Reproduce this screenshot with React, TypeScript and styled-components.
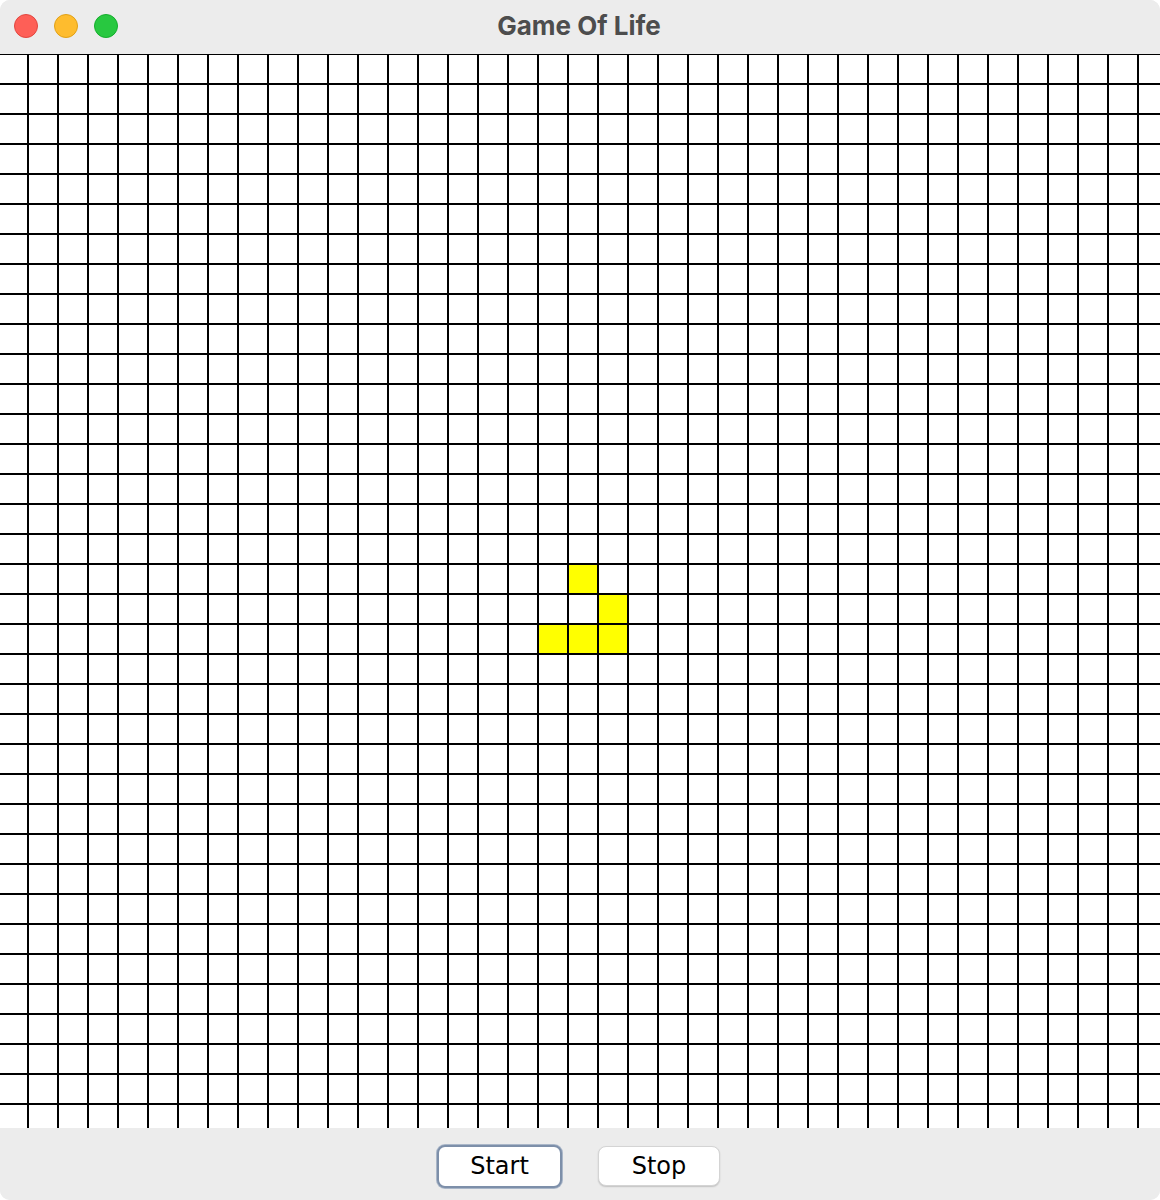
import styled, { createGlobalStyle } from 'styled-components';

const ROWS = 36;
const COLS = 39;

// glider from the screenshot: [row, col]
const alive = new Set(['17-19', '18-20', '19-18', '19-19', '19-20']);

const GlobalStyle = createGlobalStyle`
  html, body {
    margin: 0;
    padding: 0;
    background: #ffffff;
  }
  body {
    font-family: 'DejaVu Sans', 'Liberation Sans', sans-serif;
  }
`;

export default function App() {
  const cells = [];
  for (let r = 0; r < ROWS; r++) {
    for (let c = 0; c < COLS; c++) {
      cells.push(<Cell key={`${r}-${c}`} $alive={alive.has(`${r}-${c}`)} />);
    }
  }

  return (
    <>
      <GlobalStyle />
      <Window>
        <TitleBar>
          <Lights>
            <Light $color="#fe5f57" $edge="#e2463f" />
            <Light $color="#febc2e" $edge="#e1a116" />
            <Light $color="#28c840" $edge="#14ae2c" />
          </Lights>
          <Title>Game Of Life</Title>
        </TitleBar>
        <Board>
          <Grid>{cells}</Grid>
        </Board>
        <ButtonBar>
          <Button $focused>Start</Button>
          <Button>Stop</Button>
        </ButtonBar>
      </Window>
    </>
  );
}

const Window = styled.div`
  width: 1160px;
  height: 1200px;
  display: flex;
  flex-direction: column;
  border-radius: 10px;
  overflow: hidden;
  background: #ececec;
`;

const TitleBar = styled.div`
  position: relative;
  height: 54px;
  flex: none;
  display: flex;
  align-items: center;
  justify-content: center;
  background: #ececec;
`;

const Lights = styled.div`
  position: absolute;
  left: 14px;
  top: 14px;
  display: flex;
  gap: 16px;
`;

const Light = styled.span<{ $color: string; $edge: string }>`
  width: 24px;
  height: 24px;
  box-sizing: border-box;
  border-radius: 50%;
  background: ${({ $color }) => $color};
  border: 1px solid ${({ $edge }) => $edge};
`;

const Title = styled.div`
  font-family: Inter, 'Noto Sans', sans-serif;
  font-weight: 700;
  font-size: 26px;
  color: #4d4d4d;
  margin-top: -4px;
  margin-left: -2px;
`;

const Board = styled.div`
  height: 1074px;
  flex: none;
  box-sizing: border-box;
  border-top: 1px solid #000;
  overflow: hidden;
  background: #fff;
`;

const Grid = styled.div`
  display: grid;
  grid-template-columns: repeat(${COLS}, 28px);
  grid-auto-rows: 28px;
  gap: 2px;
  width: max-content;
  margin-left: -1px;
  background: #000;
`;

const Cell = styled.div<{ $alive: boolean }>`
  background: ${({ $alive }) => ($alive ? '#ffff00' : '#ffffff')};
`;

const ButtonBar = styled.div`
  flex: 1;
  display: flex;
  align-items: center;
  justify-content: center;
  gap: 36px;
  padding-top: 4px;
  padding-right: 3px;
  background: #ececec;
`;

const Button = styled.button<{ $focused?: boolean }>`
  box-sizing: border-box;
  width: ${({ $focused }) => ($focused ? '125px' : '122px')};
  height: ${({ $focused }) => ($focused ? '43px' : '40px')};
  border-radius: 8px;
  background: #ffffff;
  border: ${({ $focused }) => ($focused ? '2px solid #7d8fa9' : '0.5px solid #d4d4d4')};
  box-shadow: ${({ $focused }) =>
    $focused ? '0 0 0 1px #a9b6c8' : '0 1px 1.5px rgba(0, 0, 0, 0.18)'};
  font-family: 'DejaVu Sans', 'Liberation Sans', sans-serif;
  font-size: 24px;
  color: #000;
  padding: 0;
`;
